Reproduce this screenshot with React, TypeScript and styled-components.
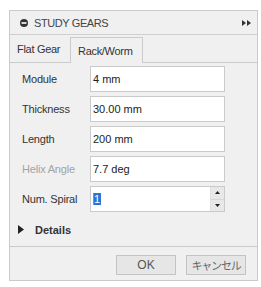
import styled, { createGlobalStyle } from "styled-components";

const GlobalStyle = createGlobalStyle`
    body {
        margin: 0;
        background: #ffffff;
        font-family: "Liberation Sans", Arial, sans-serif;
    }
`;

const Panel = styled.div`
    box-sizing: border-box;
    width: 249px;
    height: 271px;
    margin: 10px 0 0 9px;
    border: 1px solid #cacaca;
    background: #f0f0f0;
    display: flex;
    flex-direction: column;
    color: #333333;
    font-size: 11px;
`;

const Header = styled.div`
    height: 23px;
    border-bottom: 1px solid #cfcfcf;
    display: flex;
    align-items: center;
    padding: 0 6px 0 10px;
`;

const HeaderTitle = styled.span`
    margin-left: 6px;
    flex: 1;
    color: #444444;
    font-size: 11px;
    letter-spacing: -0.4px;
`;

const TabBar = styled.div`
    height: 27px;
    border-bottom: 1px solid #cacaca;
    display: flex;
    align-items: flex-end;
    padding-left: 0;
`;

const Tab = styled.div<{ $active?: boolean }>`
    box-sizing: border-box;
    height: ${(p) => (p.$active ? "26px" : "27px")};
    margin-bottom: ${(p) => (p.$active ? "-1px" : "0")};
    padding: ${(p) => (p.$active ? "0 7px" : "0 7px")};
    border: ${(p) => (p.$active ? "1px solid #cacaca" : "none")};
    border-bottom: none;
    background: #f0f0f0;
    display: flex;
    align-items: center;
    width: ${(p) => (p.$active ? "73px" : "60px")};
    color: #333333;
    letter-spacing: -0.3px;
`;

const Form = styled.div`
    display: flex;
    flex-direction: column;
    gap: 4px;
    padding: 3px 0 0 12px;
`;

const Row = styled.div`
    display: grid;
    grid-template-columns: 68px 135px;
    align-items: center;
    height: 26px;
`;

const Label = styled.span<{ $disabled?: boolean }>`
    color: ${(p) => (p.$disabled ? "#a3a3a3" : "#333333")};
    letter-spacing: -0.2px;
`;

const Field = styled.div`
    box-sizing: border-box;
    height: 26px;
    border: 1px solid #cacaca;
    background: #ffffff;
    display: flex;
    align-items: center;
    padding-left: 2px;
    font-size: 11px;
    color: #222222;
`;

const FieldText = styled.span`
    flex: 1;
`;

const Selected = styled.span`
    display: inline-block;
    background: #2b74d8;
    color: #ffffff;
    border-left: 1px solid #e8761e;
    padding: 0 1px 0 0;
    line-height: 12px;
`;

const Spinner = styled.div`
    width: 13px;
    align-self: stretch;
    display: flex;
    flex-direction: column;
    border-left: 1px solid #e0e0e0;
`;

const SpinButton = styled.div`
    flex: 1;
    background: #e8e8e8;
    display: flex;
    align-items: center;
    justify-content: center;
    & + & {
        border-top: 1px solid #d8d8d8;
    }
`;

const DetailsRow = styled.div`
    height: 33px;
    display: flex;
    align-items: center;
    padding-left: 8px;
    margin-top: 1px;
    font-weight: bold;
    color: #333333;
    gap: 11px;
`;

const Footer = styled.div`
    margin-top: auto;
    border-top: 1px solid #cacaca;
    height: 34px;
    box-sizing: border-box;
    display: flex;
    justify-content: flex-end;
    gap: 10px;
    padding: 8px 11px 0 0;
`;

const Button = styled.button`
    box-sizing: border-box;
    width: 60px;
    height: 20px;
    border: 1px solid #c3c3c3;
    border-radius: 0;
    background: #e6e6e6;
    color: #555555;
    font-family: "Liberation Sans", "Noto Sans CJK JP", sans-serif;
    font-size: 12px;
    padding: 0;
`;

const JpText = styled.span`
    font-family: "Noto Sans CJK JP", sans-serif;
    font-size: 11px;
    letter-spacing: -1.2px;
    color: #666666;
`;

function CollapseIcon() {
    return (
        <svg width="8" height="8" viewBox="0 0 8 8">
            <circle cx="4" cy="4" r="4" fill="#333" />
            <rect x="1.5" y="3.2" width="5" height="1.6" fill="#fff" />
        </svg>
    );
}

function ExpandIcon() {
    return (
        <svg width="9" height="6" viewBox="0 0 9 6">
            <polygon points="0,0 4,3 0,6" fill="#333" />
            <polygon points="5,0 9,3 5,6" fill="#333" />
        </svg>
    );
}

function Arrow({ up }: { up?: boolean }) {
    return (
        <svg width="5" height="3" viewBox="0 0 5 3">
            <polygon points={up ? "2.5,0 5,3 0,3" : "0,0 5,0 2.5,3"} fill="#222" />
        </svg>
    );
}

const fields = [
    { label: "Module", value: "4 mm" },
    { label: "Thickness", value: "30.00 mm" },
    { label: "Length", value: "200 mm" },
    { label: "Helix Angle", value: "7.7 deg", disabled: true },
];

export default function App() {
    return (
        <>
            <GlobalStyle />
            <Panel>
                <Header>
                    <CollapseIcon />
                    <HeaderTitle>STUDY GEARS</HeaderTitle>
                    <ExpandIcon />
                </Header>
                <TabBar>
                    <Tab>Flat Gear</Tab>
                    <Tab $active>Rack/Worm</Tab>
                </TabBar>
                <Form>
                    {fields.map((f) => (
                        <Row key={f.label}>
                            <Label $disabled={f.disabled}>{f.label}</Label>
                            <Field>
                                <FieldText>{f.value}</FieldText>
                            </Field>
                        </Row>
                    ))}
                    <Row>
                        <Label>Num. Spiral</Label>
                        <Field>
                            <FieldText>
                                <Selected>1</Selected>
                            </FieldText>
                            <Spinner>
                                <SpinButton>
                                    <Arrow up />
                                </SpinButton>
                                <SpinButton>
                                    <Arrow />
                                </SpinButton>
                            </Spinner>
                        </Field>
                    </Row>
                </Form>
                <DetailsRow>
                    <svg width="6" height="9" viewBox="0 0 6 9">
                        <polygon points="0,0 6,4.5 0,9" fill="#222" />
                    </svg>
                    <span>Details</span>
                </DetailsRow>
                <Footer>
                    <Button>OK</Button>
                    <Button>
                        <JpText>キャンセル</JpText>
                    </Button>
                </Footer>
            </Panel>
        </>
    );
}
